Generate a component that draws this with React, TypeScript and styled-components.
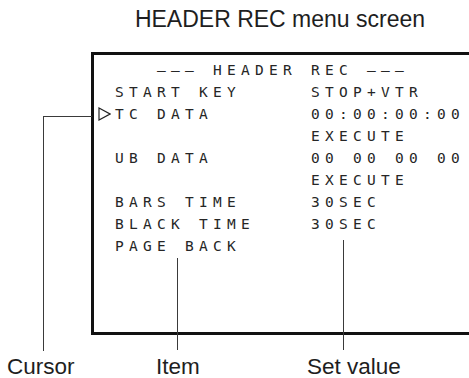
import styled, { createGlobalStyle } from 'styled-components';

const GlobalStyle = createGlobalStyle`
  html, body {
    margin: 0;
    padding: 0;
    background: #ffffff;
    overflow: hidden;
  }
`;

const Page = styled.div`
  position: relative;
  width: 469px;
  height: 378px;
  overflow: hidden;
  font-family: 'Liberation Sans', Arial, sans-serif;
  color: #1e1e1e;
`;

const Title = styled.div`
  margin-left: 91px;
  padding-top: 6px;
  font-size: 23px;
  line-height: 26px;
  text-align: center;
`;

const Screen = styled.div`
  box-sizing: border-box;
  margin-top: 20px;
  margin-left: 91px;
  width: 420px;
  height: 283px;
  border: 3px solid #111;
  padding: 4px 0 0 4px;
  font-family: 'DejaVu Sans Mono', 'Liberation Mono', monospace;
  font-size: 14.5px;
  letter-spacing: 5.27px;
  color: #262626;
`;

const Row = styled.div`
  display: flex;
  align-items: center;
  height: 22px;
  line-height: 22px;
  white-space: pre;
`;

const CursorCell = styled.span`
  display: flex;
  align-items: center;
  width: 17px;
  flex: none;
`;

const ItemCell = styled.span`
  width: 196px;
  flex: none;
`;

const ValueCell = styled.span`
  flex: none;
`;

const Heading = styled.span`
  padding-left: 17px;
`;

const Leader = styled.div<{ $left: number; $top: number; $height: number }>`
  position: absolute;
  left: ${(p) => p.$left}px;
  top: ${(p) => p.$top}px;
  height: ${(p) => p.$height}px;
  width: 0;
  border-left: 1px solid #3a3a3a;
`;

const Elbow = styled.div`
  position: absolute;
  left: 43px;
  top: 116px;
  width: 48px;
  height: 234px;
  border-top: 1px solid #3a3a3a;
  border-left: 1px solid #3a3a3a;
`;

const Labels = styled.div`
  display: grid;
  grid-template-columns: 149px 151px auto;
  margin-top: 22px;
  padding-left: 7px;
  font-size: 22.5px;
  line-height: 20px;
`;

const rows: { cursor?: boolean; item: string; value: string }[] = [
  { item: 'START KEY', value: 'STOP+VTR' },
  { cursor: true, item: 'TC DATA', value: '00:00:00:00' },
  { item: '', value: 'EXECUTE' },
  { item: 'UB DATA', value: '00 00 00 00' },
  { item: '', value: 'EXECUTE' },
  { item: 'BARS TIME', value: '30SEC' },
  { item: 'BLACK TIME', value: '30SEC' },
  { item: 'PAGE BACK', value: '' },
];

function CursorMark() {
  return (
    <svg width="13" height="14" viewBox="0 0 13 14">
      <polygon points="1,1 12,7 1,13" fill="none" stroke="#222" strokeWidth="1.2" />
    </svg>
  );
}

export default function App() {
  return (
    <Page>
      <GlobalStyle />
      <Title>HEADER REC menu screen</Title>
      <Screen>
        <Row>
          <Heading>{'   ––– HEADER REC –––'}</Heading>
        </Row>
        {rows.map((r, i) => (
          <Row key={i}>
            <CursorCell>{r.cursor && <CursorMark />}</CursorCell>
            <ItemCell>{r.item}</ItemCell>
            <ValueCell>{r.value}</ValueCell>
          </Row>
        ))}
      </Screen>
      <Elbow />
      <Leader $left={177} $top={258} $height={92} />
      <Leader $left={343} $top={240} $height={110} />
      <Labels>
        <span>Cursor</span>
        <span>Item</span>
        <span>Set value</span>
      </Labels>
    </Page>
  );
}
